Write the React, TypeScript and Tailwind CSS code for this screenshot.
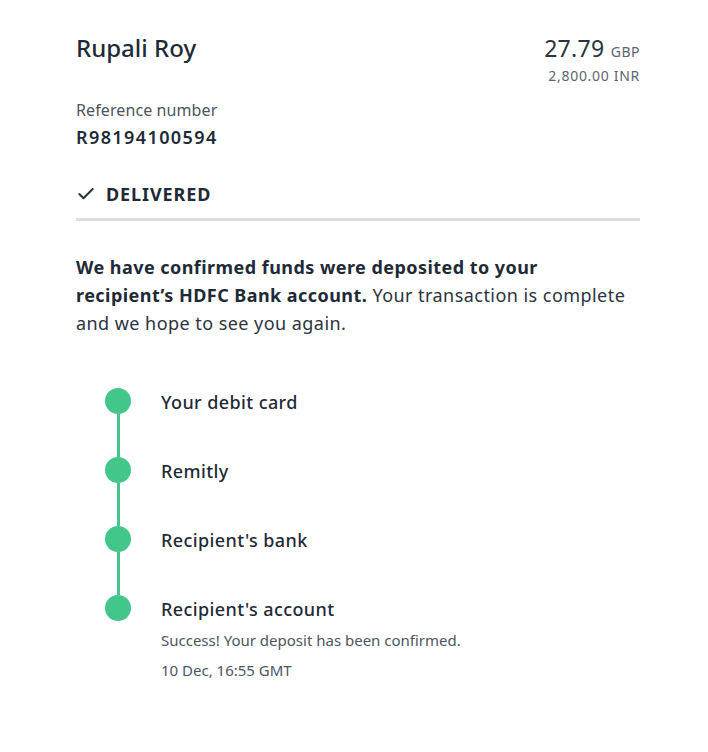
import { Check } from 'lucide-react'

const steps = [
  { label: 'Your debit card' },
  { label: 'Remitly' },
  { label: "Recipient's bank" },
  {
    label: "Recipient's account",
    note: 'Success! Your deposit has been confirmed.',
    time: '10 Dec, 16:55 GMT',
  },
]

export default function App() {
  return (
    <div className="min-h-screen bg-white text-[#1f2a37]" style={{ fontFamily: '"Noto Sans", "Open Sans", sans-serif' }}>
      <div className="w-[564px] ml-[76px] pt-[32px]">
        <div className="flex justify-between items-start">
          <h1 className="text-[24px] leading-[32px] font-medium">Rupali Roy</h1>
          <div className="text-right">
            <div className="text-[23px] leading-[32px] text-[#2b3440] tracking-[0.3px]">
              27.79 <span className="text-[14px] text-[#5a6470] tracking-[0.5px]">GBP</span>
            </div>
            <div className="text-[14px] leading-[20px] text-[#5a6470] -mt-[2px] tracking-[0.7px]">2,800.00 INR</div>
          </div>
        </div>

        <div className="mt-[13px]">
          <div className="text-[16px] leading-[22px] text-[#4b5563] tracking-[0.1px]">Reference number</div>
          <div className="mt-[2px] text-[18px] leading-[28px] font-semibold tracking-[1.4px]">R98194100594</div>
        </div>

        <div className="mt-[29px] flex items-center gap-[10px] pb-[10px] border-b-[3px] border-[#d7dde0]">
          <Check className="w-[20px] h-[20px] text-[#2b3440]" strokeWidth={2.5} />
          <span className="text-[18px] leading-[28px] font-bold tracking-[0.9px]">DELIVERED</span>
        </div>

        <p className="mt-[32px] w-[556px] text-[18px] leading-[28px] text-[#2b3440] tracking-[0.45px]">
          <span className="font-bold text-[#1f2a37]">We have confirmed funds were deposited to your recipient’s HDFC Bank account.</span>{' '}
          Your transaction is complete and we hope to see you again.
        </p>

        <div className="mt-[51px] ml-[29px]">
          {steps.map((s, i) => (
            <div key={s.label} className="flex gap-[30px]">
              <div className="flex flex-col items-center w-[26px] shrink-0">
                <div className="w-[26px] h-[26px] rounded-full bg-[#43c68a] shrink-0" />
                {i < steps.length - 1 && <div className="w-[3px] flex-1 bg-[#43c68a]" />}
              </div>
              <div className={i < steps.length - 1 ? 'pb-[42px]' : ''}>
                <div className="text-[18px] leading-[26px] font-medium tracking-[0.4px] mt-[1px]">{s.label}</div>
                {s.note && (
                  <>
                    <div className="mt-[8px] text-[15px] leading-[20px] text-[#4b5563]">{s.note}</div>
                    <div className="mt-[10px] text-[15px] leading-[20px] text-[#4b5563]">{s.time}</div>
                  </>
                )}
              </div>
            </div>
          ))}
        </div>
      </div>
    </div>
  )
}
